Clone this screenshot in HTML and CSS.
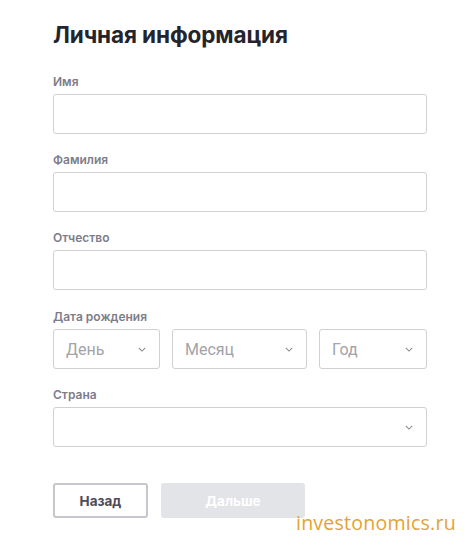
FILE: index.html
```html
<!DOCTYPE html>
<html lang="ru">
<head>
<meta charset="utf-8">
<link rel="stylesheet" href="styles.css">
</head>
<body>
<div class="page">
  <h1 class="title">Личная информация</h1>
  <div class="field">
    <div class="label">Имя</div>
    <div class="input"></div>
  </div>
  <div class="field">
    <div class="label">Фамилия</div>
    <div class="input"></div>
  </div>
  <div class="field">
    <div class="label">Отчество</div>
    <div class="input"></div>
  </div>
  <div class="field dob">
    <div class="label">Дата рождения</div>
    <div class="date-row">
      <div class="input select day"><span class="ph">День</span><svg class="chev" viewBox="0 0 10 6" width="8" height="5"><path d="M1 1l4 4 4-4" fill="none" stroke="#8a8a8a" stroke-width="1.3"/></svg></div>
      <div class="input select month"><span class="ph">Месяц</span><svg class="chev" viewBox="0 0 10 6" width="8" height="5"><path d="M1 1l4 4 4-4" fill="none" stroke="#8a8a8a" stroke-width="1.3"/></svg></div>
      <div class="input select year"><span class="ph">Год</span><svg class="chev" viewBox="0 0 10 6" width="8" height="5"><path d="M1 1l4 4 4-4" fill="none" stroke="#8a8a8a" stroke-width="1.3"/></svg></div>
    </div>
  </div>
  <div class="field">
    <div class="label">Страна</div>
    <div class="input select"><span class="ph"></span><svg class="chev" viewBox="0 0 10 6" width="8" height="5"><path d="M1 1l4 4 4-4" fill="none" stroke="#8a8a8a" stroke-width="1.3"/></svg></div>
  </div>
  <div class="buttons">
    <button class="btn back">Назад</button>
    <button class="btn next">Дальше</button>
  </div>
</div>
<div class="watermark">investonomics.ru</div>
</body>
</html>
```
FILE: styles.css
```css
* { box-sizing: border-box; }
html, body { margin: 0; padding: 0; background: #fff; }
body { width: 471px; height: 547px; position: relative; overflow: hidden; font-family: Inter, "Noto Sans", sans-serif; }
.page { padding: 20px 44px 0 53px; display: flex; flex-direction: column; }
.title { margin: 0 0 25px; font-size: 22.5px; font-weight: 700; color: #24242c; line-height: 30px; letter-spacing: -0.1px; }
.field { display: flex; flex-direction: column; margin-bottom: 19px; }
.dob { margin-top: 1px; }
.label { font-size: 12px; font-weight: 600; color: #7d7d8a; line-height: 14px; margin-bottom: 5px; }
.input { height: 40px; border: 1px solid #cfcfd4; border-radius: 3px; background: #fff; }
.select { display: flex; align-items: center; justify-content: space-between; padding: 0 13px 0 12px; }
.ph { font-family: Roboto, sans-serif; font-size: 16px; color: #a3a3a8; }
.chev { flex: none; }
.date-row { display: flex; gap: 12px; }
.day { width: 107px; }
.month { width: 135px; }
.year { width: 108px; }
.buttons { display: flex; gap: 13px; margin-top: 17px; }
.btn { height: 35px; border-radius: 3px; font-family: Inter, sans-serif; font-size: 13.5px; font-weight: 700; }
.back { width: 95px; background: #fff; border: 2px solid #c6c6cc; color: #4c4c58; }
.next { width: 144px; background: #e3e4e8; border: none; color: #fff; }
.watermark { position: absolute; left: 296px; top: 509px; font-family: "Open Sans", sans-serif; font-size: 19.6px; color: #e3a333; letter-spacing: 0.2px; }
```
